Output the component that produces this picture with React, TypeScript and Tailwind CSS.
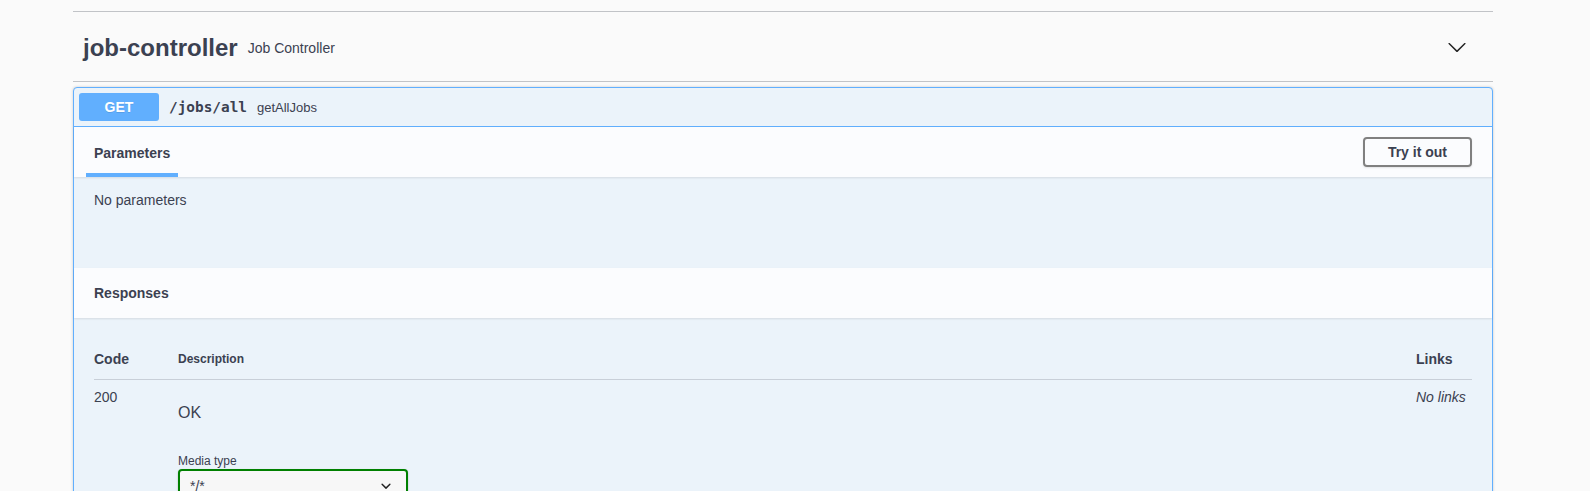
import React from 'react';

const sans = "font-['Liberation_Sans',Arial,sans-serif]";

function ExpandArrow() {
  return (
    <svg width="20" height="20" viewBox="0 0 20 20" className="fill-[#222]">
      <path d="M17.418 6.109c.272-.268.709-.268.979 0s.271.701 0 .969l-7.908 7.83c-.27.268-.707.268-.979 0l-7.908-7.83c-.27-.268-.27-.701 0-.969.271-.268.709-.268.979 0L10 13.25l7.418-7.141z" />
    </svg>
  );
}

function SelectArrow() {
  return (
    <svg width="20" height="20" viewBox="0 0 20 20" className="fill-[#222]">
      <path d="M13.418 7.859a.695.695 0 01.978 0 .68.68 0 010 .969l-3.908 3.83a.697.697 0 01-.979 0l-3.908-3.83a.68.68 0 010-.969.695.695 0 01.978 0L10 11z" />
    </svg>
  );
}

function Operation() {
  return (
    <div className="mt-[5px] rounded border border-[#61affe] bg-[#ebf3fa] shadow-[0_0_3px_rgba(0,0,0,0.19)]">
      {/* summary */}
      <div className="flex items-center border-b border-[#61affe] p-[5px]">
        <span className="w-[80px] rounded-[3px] bg-[#61affe] py-[6px] text-center text-[14px] leading-[16px] font-bold text-white [text-shadow:0_1px_0_rgba(0,0,0,0.1)]">
          GET
        </span>
        <span className="px-[10px] pt-[1px] font-['DejaVu_Sans_Mono',monospace] text-[14.4px] font-bold">/jobs/all</span>
        <span className="pt-[1px] text-[13px]">getAllJobs</span>
      </div>

      {/* parameters tab header */}
      <div className="flex h-[50px] items-stretch justify-between bg-[#fbfcfe] pl-[12px] pr-[20px] shadow-[0_1px_2px_rgba(0,0,0,0.1)]">
        <div className="flex items-center border-b-4 border-[#61affe] px-[8px] pt-[6px] text-[14px] font-bold">
          Parameters
        </div>
        <button className="self-center rounded border-2 border-[#808080] px-[23px] py-[5px] text-[14px] leading-[16px] font-bold text-[#3b4151] shadow-[0_1px_2px_rgba(0,0,0,0.1)]">
          Try it out
        </button>
      </div>

      <div className="h-[91px] px-[20px] pt-[13px] text-[14px] leading-[20px]">No parameters</div>

      {/* responses */}
      <div className="flex h-[50px] items-center bg-[#fbfcfe] px-[20px] text-[14px] font-bold shadow-[0_1px_2px_rgba(0,0,0,0.1)]">
        Responses
      </div>

      <div className="px-[20px] pt-[21px] pb-[20px]">
        <div className="flex items-center border-b border-[#c8cfd8] py-[12px] leading-[16px]">
          <div className="w-[84px] text-[14px] font-bold">Code</div>
          <div className="flex-1 text-[12px] font-bold">Description</div>
          <div className="w-[56px] text-[14px] font-bold">Links</div>
        </div>
        <div className="flex pt-[9px]">
          <div className="w-[84px] text-[14px] leading-[16px]">200</div>
          <div className="flex-1">
            <p className="mt-[15px] text-[16px] leading-[18px]">OK</p>
            <div className="mt-[32px] text-[12px] leading-[14px]">Media type</div>
            <div className="mt-[1px] flex w-[230px] items-center justify-between rounded border-2 border-[#008000] bg-[#f7f7f7] py-[5px] pr-[10px] pl-[10px] shadow-[0_1px_2px_rgba(0,0,0,0.25)]">
              <span className="text-[14px] leading-[20px]">*/*</span>
              <SelectArrow />
            </div>
          </div>
          <div className="w-[56px] text-[14px] leading-[16px] italic">No links</div>
        </div>
      </div>
    </div>
  );
}

export default function App() {
  return (
    <div className={`min-h-screen bg-[#fafafa] text-[#3b4151] ${sans}`}>
      <div className="ml-[73px] w-[1420px] pt-[11px]">
        <div className="border-t border-[#c1c3c7]" />
        <h3 className="flex h-[70px] items-center border-b border-[#c1c3c7] pt-[3px] pl-[10px] pr-[26px]">
          <span className="text-[24px] font-bold">job-controller</span>
          <span className="flex-1 px-[10px] pt-[1px] text-[14px]">Job Controller</span>
          <span className="-mt-[3px]">
            <ExpandArrow />
          </span>
        </h3>
        <Operation />
      </div>
    </div>
  );
}
